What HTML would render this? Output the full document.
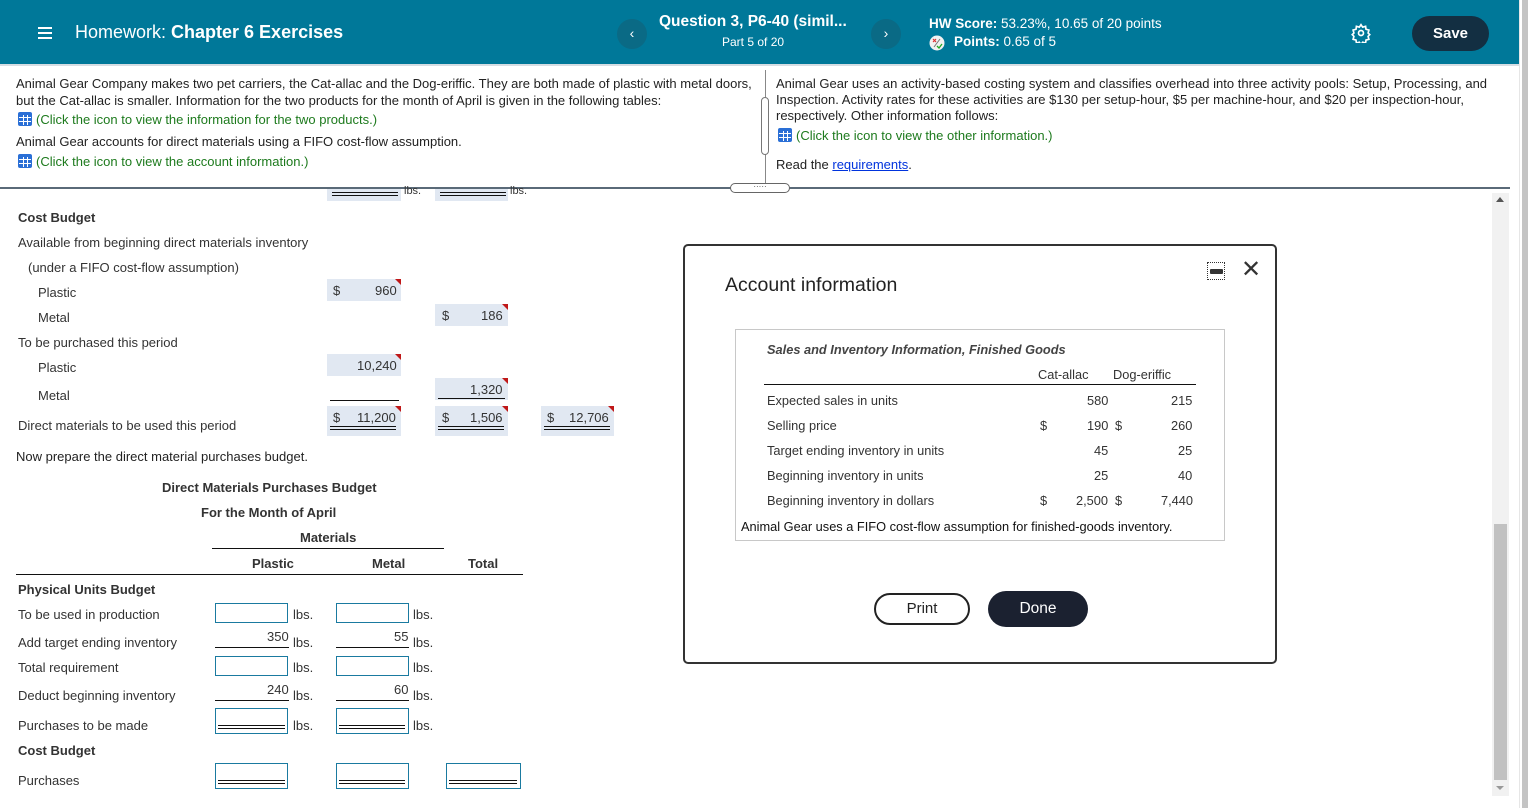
<!DOCTYPE html>
<html><head><meta charset="utf-8">
<style>
*{margin:0;padding:0;box-sizing:border-box}
body{width:1528px;height:808px;overflow:hidden;background:#fff;font-family:"Liberation Sans",Arial,sans-serif;position:relative;color:#222}
.a{position:absolute;white-space:nowrap}
.t{font-size:13px;color:#333}
.m{font-size:12.8px}
.hdr{position:absolute;left:0;top:0;width:1519px;height:64px;background:#007899}
.hline{position:absolute;left:0;top:64px;width:1519px;height:2px;background:#d6dde3}
.rstrip{position:absolute;left:1519px;top:0;width:9px;height:808px;background:#fff;border-left:1px solid #e6e6e6}
.rstrip i{position:absolute;left:2px;top:0;width:7px;height:808px;background:#c4c4c4}
.circ{position:absolute;width:30px;height:30px;border-radius:50%;background:#0a6a85;color:#fff;font-size:14px;text-align:center;line-height:29px}
.grid{display:inline-block;width:14px;height:14px;background:#2a6fd6;border-radius:2px;vertical-align:-2px;margin-right:4px;background-image:linear-gradient(#fff,#fff),linear-gradient(#fff,#fff),linear-gradient(#fff,#fff),linear-gradient(#fff,#fff);background-size:12px 1px,12px 1px,1px 10px,1px 10px;background-position:1px 5px,1px 9px,5px 3px,9px 3px;background-repeat:no-repeat}
.g{color:#1d7a1d}
.sh{position:absolute;background:#e1e8f2;height:22px}
.red{position:absolute;width:0;height:0;border-top:6px solid #c01818;border-left:6px solid transparent}
.ib{position:absolute;border:1.5px solid #1a7aa0;background:#fff;width:73px;height:20px}
.dbl{position:absolute;height:4px;border-top:1.5px solid #111;border-bottom:1.5px solid #111}
.ul{position:absolute;height:0;border-top:1.5px solid #111}
.b{font-weight:bold}
</style></head><body>
<div class="hdr"></div><div class="hline"></div>
<div class="rstrip"><i></i></div>
<div class="a" style="left:38px;top:25px;width:14px;height:14px">
 <div style="position:absolute;top:2px;left:0;width:14px;height:1.5px;background:#fff"></div>
 <div style="position:absolute;top:7px;left:0;width:14px;height:1.5px;background:#fff"></div>
 <div style="position:absolute;top:12px;left:0;width:14px;height:1.5px;background:#fff"></div>
</div>
<div class="a" style="left:75px;top:22px;color:#fff;font-size:18px">Homework: <b>Chapter 6 Exercises</b></div>
<div class="circ" style="left:617px;top:19px">‹</div>
<div class="a" style="left:659px;top:13px;color:#fff;font-size:15.5px;font-weight:bold">Question 3, P6-40 (simil...</div>
<div class="a" style="left:722px;top:35px;color:#fff;font-size:12px">Part 5 of 20</div>
<div class="circ" style="left:871px;top:19px">›</div>
<div class="a" style="left:929px;top:16px;color:#fff;font-size:13.5px"><b>HW Score:</b> 53.23%, 10.65 of 20 points</div>
<svg class="a" style="left:929px;top:35px" width="16" height="16" viewBox="0 0 16 16"><circle cx="8" cy="8" r="7.5" fill="#f2f2f2"/><path d="M11 4L5 12" stroke="#777" stroke-width="1"/><path d="M4 4l3 3M7 4L4 7" stroke="#d33" stroke-width="1.2"/><path d="M8 11l2 2 3-4" stroke="#2a2" stroke-width="1.3" fill="none"/></svg>
<div class="a" style="left:954px;top:34px;color:#fff;font-size:13.5px"><b>Points:</b> 0.65 of 5</div>
<svg class="a" style="left:1351px;top:23px" width="20" height="20" viewBox="0 0 24 24" fill="none" stroke="#fff" stroke-width="2"><circle cx="12" cy="12" r="3"/><path d="M12 2l2 3 3.5-1 .5 3.5 3.5 1-1 3.5 2 2-2 2 1 3.5-3.5 1-.5 3.5-3.5-1-2 3-2-3-3.5 1-.5-3.5-3.5-1 1-3.5-2-2 2-2-1-3.5 3.5-1 .5-3.5 3.5 1z"/></svg>
<div class="a" style="left:1412px;top:16px;width:77px;height:35px;border-radius:18px;background:#132f42;color:#fff;font-weight:bold;font-size:15px;text-align:center;line-height:35px">Save</div>

<div class="a" style="left:16px;top:76px;font-size:13px;line-height:16.5px;color:#222">Animal Gear Company makes two pet carriers, the Cat-allac and the Dog-eriffic. They are both made of plastic with metal doors,<br>but the Cat-allac is smaller. Information for the two products for the month of April is given in the following tables:</div>
<div class="a g" style="left:18px;top:112px;font-size:13px"><span class="grid"></span>(Click the icon to view the information for the two products.)</div>
<div class="a" style="left:16px;top:134px;font-size:13px">Animal Gear accounts for direct materials using a FIFO cost-flow assumption.</div>
<div class="a g" style="left:18px;top:154px;font-size:13px"><span class="grid"></span>(Click the icon to view the account information.)</div>
<div class="a" style="left:765px;top:70px;width:1px;height:118px;background:#888"></div>
<div class="a" style="left:761px;top:97px;width:8px;height:58px;border:1px solid #777;border-radius:4px;background:#fff"></div>
<div class="a" style="left:776px;top:76px;font-size:13px;line-height:16px">Animal Gear uses an activity-based costing system and classifies overhead into three activity pools: Setup, Processing, and<br>Inspection. Activity rates for these activities are $130 per setup-hour, $5 per machine-hour, and $20 per inspection-hour,<br>respectively. Other information follows:</div>
<div class="a g" style="left:778px;top:128px;font-size:13px"><span class="grid"></span>(Click the icon to view the other information.)</div>
<div class="a" style="left:776px;top:157px;font-size:13px">Read the <span style="color:#0033dd;text-decoration:underline">requirements</span>.</div>
<div class="a" style="left:0;top:187px;width:1510px;height:1.5px;background:#5a6a78"></div>
<div class="a" style="left:730px;top:183px;width:60px;height:10px;border:1px solid #666;border-radius:5px;background:#fff;font-size:8px;text-align:center;line-height:6px;color:#444">·····</div>

<div class="a" style="left:1492px;top:193px;width:17px;height:603px;background:#f1f1f1"></div>
<div class="a" style="left:1494px;top:524px;width:13px;height:256px;background:#c1c1c1"></div>
<div class="a" style="left:1496px;top:197px;border-left:4px solid transparent;border-right:4px solid transparent;border-bottom:5px solid #555"></div>
<div class="a" style="left:1496px;top:786px;border-left:4px solid transparent;border-right:4px solid transparent;border-top:4px solid #999"></div>

<div class="sh" style="left:327px;top:189px;width:74px;height:12px"></div>
<div class="dbl" style="left:332px;top:192px;width:66px"></div>
<div class="a t" style="left:404px;top:185px;font-size:11px">lbs.</div>
<div class="sh" style="left:435px;top:189px;width:73px;height:12px"></div>
<div class="dbl" style="left:440px;top:192px;width:66px"></div>
<div class="a t" style="left:510px;top:185px;font-size:11px">lbs.</div>

<div class="a t b" style="left:18px;top:210px">Cost Budget</div>
<div class="a t" style="left:18px;top:235px">Available from beginning direct materials inventory</div>
<div class="a t" style="left:28px;top:260px">(under a FIFO cost-flow assumption)</div>
<div class="a t" style="left:38px;top:285px">Plastic</div>
<div class="a t" style="left:38px;top:310px">Metal</div>
<div class="a t" style="left:18px;top:335px">To be purchased this period</div>
<div class="a t" style="left:38px;top:360px">Plastic</div>
<div class="a t" style="left:38px;top:388px">Metal</div>
<div class="a t" style="left:18px;top:418px">Direct materials to be used this period</div>

<div class="sh" style="left:327px;top:279px;width:74px"></div><div class="red" style="left:395px;top:279px"></div>
<div class="a t" style="left:333px;top:283px">$</div><div class="a t" style="left:375px;top:283px">960</div>
<div class="sh" style="left:435px;top:304px;width:73px"></div><div class="red" style="left:502px;top:304px"></div>
<div class="a t" style="left:442px;top:308px">$</div><div class="a t" style="left:481px;top:308px">186</div>
<div class="sh" style="left:327px;top:354px;width:74px"></div><div class="red" style="left:395px;top:354px"></div>
<div class="a t" style="left:357px;top:358px">10,240</div>
<div class="sh" style="left:435px;top:378px;width:73px"></div><div class="red" style="left:502px;top:378px"></div>
<div class="a t" style="left:470px;top:382px">1,320</div>
<div class="ul" style="left:330px;top:400px;width:69px"></div>
<div class="ul" style="left:438px;top:398px;width:67px"></div>
<div class="sh" style="left:327px;top:406px;width:74px;height:30px"></div><div class="red" style="left:395px;top:406px"></div>
<div class="a t" style="left:333px;top:410px">$</div><div class="a t" style="left:357px;top:410px">11,200</div>
<div class="dbl" style="left:330px;top:426px;width:66px"></div>
<div class="sh" style="left:435px;top:406px;width:73px;height:30px"></div><div class="red" style="left:502px;top:406px"></div>
<div class="a t" style="left:442px;top:410px">$</div><div class="a t" style="left:470px;top:410px">1,506</div>
<div class="dbl" style="left:438px;top:426px;width:66px"></div>
<div class="sh" style="left:541px;top:406px;width:73px;height:30px"></div><div class="red" style="left:608px;top:406px"></div>
<div class="a t" style="left:547px;top:410px">$</div><div class="a t" style="left:569px;top:410px">12,706</div>
<div class="dbl" style="left:544px;top:426px;width:66px"></div>

<div class="a" style="left:16px;top:449px;font-size:13px">Now prepare the direct material purchases budget.</div>

<div class="a t b" style="left:162px;top:480px">Direct Materials Purchases Budget</div>
<div class="a t b" style="left:201px;top:505px">For the Month of April</div>
<div class="a t b" style="left:300px;top:530px">Materials</div>
<div class="ul" style="left:212px;top:548px;width:232px;border-top-width:1px"></div>
<div class="a t b" style="left:252px;top:556px">Plastic</div>
<div class="a t b" style="left:372px;top:556px">Metal</div>
<div class="a t b" style="left:468px;top:556px">Total</div>
<div class="ul" style="left:16px;top:574px;width:507px;border-top-width:1px"></div>
<div class="a t b" style="left:18px;top:582px">Physical Units Budget</div>
<div class="a t" style="left:18px;top:607px">To be used in production</div>
<div class="a t" style="left:18px;top:635px">Add target ending inventory</div>
<div class="a t" style="left:18px;top:660px">Total requirement</div>
<div class="a t" style="left:18px;top:688px">Deduct beginning inventory</div>
<div class="a t" style="left:18px;top:718px">Purchases to be made</div>
<div class="a t b" style="left:18px;top:743px">Cost Budget</div>
<div class="a t" style="left:18px;top:773px">Purchases</div>

<div class="ib" style="left:215px;top:603px"></div><div class="a t" style="left:293px;top:607px">lbs.</div>
<div class="ib" style="left:336px;top:603px"></div><div class="a t" style="left:413px;top:607px">lbs.</div>
<div class="a t" style="left:267px;top:629px">350</div><div class="ul" style="left:215px;top:647px;width:74px;border-top-width:1px"></div><div class="a t" style="left:293px;top:635px">lbs.</div>
<div class="a t" style="left:394px;top:629px">55</div><div class="ul" style="left:336px;top:647px;width:73px;border-top-width:1px"></div><div class="a t" style="left:413px;top:635px">lbs.</div>
<div class="ib" style="left:215px;top:656px"></div><div class="a t" style="left:293px;top:660px">lbs.</div>
<div class="ib" style="left:336px;top:656px"></div><div class="a t" style="left:413px;top:660px">lbs.</div>
<div class="a t" style="left:267px;top:682px">240</div><div class="ul" style="left:215px;top:700px;width:74px;border-top-width:1px"></div><div class="a t" style="left:293px;top:688px">lbs.</div>
<div class="a t" style="left:394px;top:682px">60</div><div class="ul" style="left:336px;top:700px;width:73px;border-top-width:1px"></div><div class="a t" style="left:413px;top:688px">lbs.</div>
<div class="ib" style="left:215px;top:708px;height:26px"></div><div class="dbl" style="left:218px;top:725px;width:67px"></div><div class="a t" style="left:293px;top:718px">lbs.</div>
<div class="ib" style="left:336px;top:708px;height:26px"></div><div class="dbl" style="left:339px;top:725px;width:66px"></div><div class="a t" style="left:413px;top:718px">lbs.</div>
<div class="ib" style="left:215px;top:763px;height:26px"></div><div class="dbl" style="left:218px;top:780px;width:67px"></div>
<div class="ib" style="left:336px;top:763px;height:26px"></div><div class="dbl" style="left:339px;top:780px;width:66px"></div>
<div class="ib" style="left:446px;top:763px;height:26px;width:75px"></div><div class="dbl" style="left:449px;top:780px;width:68px"></div>

<div class="a" style="left:683px;top:244px;width:594px;height:420px;border:2px solid #333;border-radius:5px;background:#fff"></div>
<div class="a" style="left:725px;top:274px;font-size:19.5px;color:#222">Account information</div>
<div class="a" style="left:1207px;top:262px;width:18px;height:18px;border:1px dotted #333"></div>
<div class="a" style="left:1210px;top:269px;width:13px;height:5px;background:#333;border-radius:1px"></div>
<div class="a" style="left:1241px;top:255px;font-size:24px;color:#333;font-weight:300">✕</div>
<div class="a" style="left:735px;top:329px;width:490px;height:212px;border:1px solid #c8c8c8"></div>
<div class="a t m" style="left:767px;top:342px;font-style:italic;font-weight:bold;color:#444">Sales and Inventory Information, Finished Goods</div>
<div class="a t m" style="left:1038px;top:367px">Cat-allac</div>
<div class="a t m" style="left:1113px;top:367px">Dog-eriffic</div>
<div class="ul" style="left:764px;top:384px;width:432px;border-top-width:1px"></div>
<div class="a t m" style="left:767px;top:393px">Expected sales in units</div>
<div class="a t m" style="left:767px;top:418px">Selling price</div>
<div class="a t m" style="left:767px;top:443px">Target ending inventory in units</div>
<div class="a t m" style="left:767px;top:468px">Beginning inventory in units</div>
<div class="a t m" style="left:767px;top:493px">Beginning inventory in dollars</div>
<div class="a t m" style="left:1040px;top:418px">$</div><div class="a t m" style="left:1040px;top:493px">$</div>
<div class="a t m" style="left:1115px;top:418px">$</div><div class="a t m" style="left:1115px;top:493px">$</div>
<div class="a t m" style="left:1087px;top:393px">580</div><div class="a t m" style="left:1171px;top:393px">215</div>
<div class="a t m" style="left:1087px;top:418px">190</div><div class="a t m" style="left:1171px;top:418px">260</div>
<div class="a t m" style="left:1094px;top:443px">45</div><div class="a t m" style="left:1178px;top:443px">25</div>
<div class="a t m" style="left:1094px;top:468px">25</div><div class="a t m" style="left:1178px;top:468px">40</div>
<div class="a t m" style="left:1076px;top:493px">2,500</div><div class="a t m" style="left:1161px;top:493px">7,440</div>
<div class="a" style="left:741px;top:519px;font-size:12.8px;color:#111">Animal Gear uses a FIFO cost-flow assumption for finished-goods inventory.</div>
<div class="a" style="left:874px;top:593px;width:96px;height:32px;border:2px solid #222;border-radius:16px;text-align:center;line-height:28px;font-size:15px;color:#222">Print</div>
<div class="a" style="left:988px;top:591px;width:100px;height:36px;border-radius:18px;background:#1b2130;color:#fff;text-align:center;line-height:36px;font-size:15.5px">Done</div>
</body></html>
